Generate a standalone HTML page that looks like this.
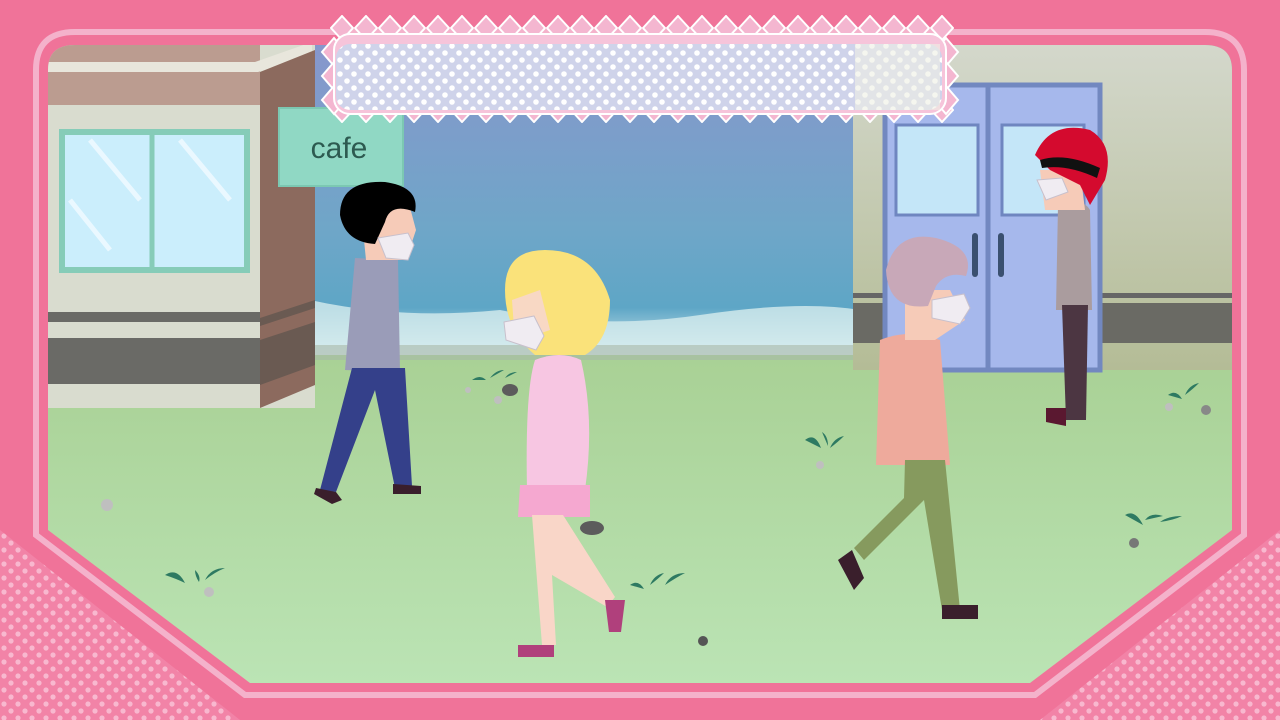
<!DOCTYPE html>
<html><head><meta charset="utf-8"><style>
html,body{margin:0;padding:0;width:1280px;height:720px;overflow:hidden;background:#f07399}
svg{display:block}
</style></head><body>
<svg width="1280" height="720" viewBox="0 0 1280 720" xmlns="http://www.w3.org/2000/svg">
<defs>
<pattern id="dots" width="14" height="14" patternUnits="userSpaceOnUse">
<rect width="14" height="14" fill="#f283a7"/><circle cx="4" cy="4" r="2.6" fill="#f8b8cf"/><circle cx="11" cy="11" r="2.6" fill="#f8b8cf"/></pattern>
<pattern id="ldots" width="14" height="14" patternUnits="userSpaceOnUse">
<rect width="14" height="14" fill="#cfd3ea"/><circle cx="4" cy="4" r="2.8" fill="#fff"/><circle cx="11" cy="11" r="2.8" fill="#fff"/></pattern>
<pattern id="diam" x="330" y="15" width="24" height="26" patternUnits="userSpaceOnUse">
<path d="M12 1 L23 13 L12 25 L1 13 Z" fill="#f4b6d0" stroke="#fff" stroke-width="2"/></pattern>
<pattern id="diam2" x="330" y="97" width="24" height="26" patternUnits="userSpaceOnUse">
<path d="M12 1 L23 13 L12 25 L1 13 Z" fill="#f4b6d0" stroke="#fff" stroke-width="2"/></pattern>
<linearGradient id="sky" x1="0" y1="0" x2="0" y2="1"><stop offset="0" stop-color="#8896cc"/><stop offset="0.6" stop-color="#6fa6c8"/><stop offset="0.85" stop-color="#5ea6c6"/><stop offset="1" stop-color="#d8ecee"/></linearGradient>
<linearGradient id="ground" x1="0" y1="0" x2="0" y2="1"><stop offset="0" stop-color="#8a9e80"/><stop offset="0.1" stop-color="#8da284"/><stop offset="0.45" stop-color="#a7cf92"/><stop offset="1" stop-color="#bde6b8"/></linearGradient>
<linearGradient id="wall" x1="0" y1="0" x2="0" y2="1"><stop offset="0" stop-color="#d4d8cc"/><stop offset="1" stop-color="#b4bc96"/></linearGradient>
<clipPath id="scene"><path d="M48 70 Q48 45 75 45 L1205 45 Q1232 45 1232 70 L1232 530 L1030 683 L250 683 L48 530 Z"/></clipPath>
</defs>
<path d="M0 530 L240 720 L0 720 Z" fill="url(#dots)"/>
<path d="M1280 530 L1040 720 L1280 720 Z" fill="url(#dots)"/>
<path d="M36 70 Q36 32 75 32 L1205 32 Q1244 32 1244 70 L1244 535 L1035 695 L245 695 L36 535 Z" fill="none" stroke="#f4b2cb" stroke-width="6"/>
<g clip-path="url(#scene)">
<rect x="0" y="0" width="1280" height="720" fill="url(#ground)"/>
<rect x="310" y="40" width="560" height="315" fill="url(#sky)"/>
<path d="M310 300 Q400 320 500 310 Q600 330 700 315 Q800 300 860 310 L860 355 L310 355 Z" fill="#d6ecee" opacity="0.8"/>
<rect x="310" y="345" width="550" height="15" fill="#a8b8a8" opacity="0.6"/>
<rect x="45" y="42" width="270" height="366" fill="#d9dccf"/>
<path d="M45 42 L260 42 L260 105 L45 105 Z" fill="#bb9c90"/>
<path d="M45 62 L255 62 L312 42 L312 56 L258 72 L45 72Z" fill="#e8e6dc"/>
<path d="M260 72 L315 50 L315 385 L260 408 Z" fill="#8c6a5e"/>
<rect x="45" y="312" width="215" height="10" fill="#6a6a66"/>
<rect x="45" y="338" width="215" height="46" fill="#6a6a66"/>
<path d="M260 318 L315 300 L315 308 L260 326Z M260 340 L315 322 L315 365 L260 385Z" fill="#6a5a52"/>
<rect x="62" y="132" width="185" height="138" fill="#cbeefc" stroke="#86ccb8" stroke-width="6"/>
<line x1="152" y1="132" x2="152" y2="270" stroke="#86ccb8" stroke-width="5"/>
<path d="M90 140 L140 200 M180 140 L230 200 M70 200 L110 250" stroke="#eaf8ff" stroke-width="5"/>
<rect x="279" y="108" width="124" height="78" fill="#90d8c4" stroke="#7cc8b2" stroke-width="2"/>
<text x="339" y="158" font-family="Liberation Sans, sans-serif" font-size="30" fill="#2d5a50" text-anchor="middle">cafe</text>
<rect x="853" y="42" width="385" height="328" fill="url(#wall)"/>
<rect x="853" y="293" width="385" height="5" fill="#666"/>
<rect x="853" y="303" width="385" height="40" fill="#6a6a64"/>
<rect x="885" y="85" width="215" height="285" fill="#a6b8ec" stroke="#7288c0" stroke-width="5"/>
<line x1="988" y1="85" x2="988" y2="370" stroke="#7288c0" stroke-width="5"/>
<rect x="896" y="125" width="82" height="90" fill="#c4e6f8" stroke="#6f86c0" stroke-width="3"/>
<rect x="1002" y="125" width="82" height="90" fill="#c4e6f8" stroke="#6f86c0" stroke-width="3"/>
<rect x="972" y="233" width="6" height="44" rx="3" fill="#3a5070"/>
<rect x="998" y="233" width="6" height="44" rx="3" fill="#3a5070"/>
<g fill="#2e7a62">
<path d="M165 575 q12 -8 20 8 q-8 -4 -20 -8Z M195 570 q6 6 4 12 q-4 -6 -4 -12Z M205 580 q6 -12 20 -12 q-10 4 -20 12Z"/>
<path d="M630 585 q8 -6 14 4 Z M650 585 q4 -10 14 -12 q-6 6 -14 12Z M665 585 q6 -12 20 -12 q-8 4 -20 12Z"/>
<path d="M805 440 q10 -8 16 8Z M822 432 q6 4 6 14Z M830 448 q4 -10 14 -12 q-6 6 -14 12Z"/>
<path d="M1125 515 q10 -6 18 10Z M1145 520 q6 -8 18 -4Z M1160 522 q8 -6 22 -6 q-8 4 -22 6Z"/>
<path d="M1168 395 q8 -6 14 4Z M1185 395 q4 -10 14 -12 q-6 6 -14 12Z"/>
<path d="M472 380 q8 -6 14 0Z M490 378 q6 -8 14 -8Z M505 378 q4 -6 12 -6Z"/>
</g>
<g fill="#bfbfbf"><circle cx="107" cy="505" r="6"/><circle cx="209" cy="592" r="5"/><circle cx="1134" cy="543" r="5" fill="#777"/><circle cx="1206" cy="410" r="5" fill="#888"/><circle cx="1169" cy="407" r="4"/><circle cx="703" cy="641" r="5" fill="#555"/><circle cx="820" cy="465" r="4"/><circle cx="498" cy="400" r="4"/><circle cx="468" cy="390" r="3"/></g>
<ellipse cx="592" cy="528" rx="12" ry="7" fill="#5c5c5c"/><ellipse cx="510" cy="390" rx="8" ry="6" fill="#5c5c5c"/>
<path d="M355 258 L345 370 L400 372 L398 260 Z" fill="#9a9cb8"/>
<path d="M352 368 L320 490 L336 492 L375 390 L395 488 L412 486 L405 368Z" fill="#34408a"/>
<path d="M316 488 l20 4 l6 8 l-10 4 l-18 -10Z M393 484 l28 2 l0 8 l-28 0Z" fill="#3a1f2c"/>
<path d="M360 200 q22 -20 48 0 l8 30 l-10 30 l-40 0 Z" fill="#f6cbb8"/>
<path d="M340 215 q0 -35 45 -33 q35 5 30 30 q-25 -10 -30 10 l-10 22 q-30 -2 -35 -29Z" fill="#000"/>
<path d="M378 238 l30 -5 l6 12 l-6 15 l-22 -2 Z" fill="#f0ecf2" stroke="#c8c0cc"/>
<path d="M535 360 q-10 30 -8 130 l58 0 q10 -70 -4 -130 Q560 350 535 360Z" fill="#f7c6e2"/>
<path d="M520 485 l70 0 l0 32 l-72 0Z" fill="#f5a8d0"/>
<path d="M532 515 l10 130 l14 0 l-4 -70 l55 32 l8 -10 l-52 -82Z" fill="#f9d6c8"/>
<path d="M518 645 l36 0 l0 12 l-36 0Z M605 600 l20 0 l-4 32 l-12 0Z" fill="#b0407c"/>
<path d="M505 290 q0 -40 40 -40 q50 0 65 50 q0 40 -25 55 l-50 0 q-30 -25 -30 -65Z" fill="#fae27a"/>
<path d="M512 300 l28 -10 l10 40 l-35 12 Z" fill="#f8d8c4"/>
<path d="M504 322 l30 -6 l10 20 l-8 14 l-30 -10Z" fill="#f0ecf2" stroke="#c8c0cc"/>
<path d="M880 340 q30 -12 60 0 l10 125 l-74 0Z" fill="#eeaa9c"/>
<path d="M905 460 l40 0 l15 150 l-18 0 l-18 -110 l-60 60 l-10 -12 l50 -50Z" fill="#869a5e"/>
<path d="M838 560 l14 -10 l12 28 l-10 12Z M942 605 l36 0 l0 14 l-36 0Z" fill="#3a1f2c"/>
<path d="M905 290 l45 0 l15 30 l-30 20 l-30 0Z" fill="#f6cbb8"/>
<path d="M886 270 q10 -40 50 -32 q40 10 30 38 q-20 -5 -30 10 l-8 20 q-40 5 -42 -36Z" fill="#c8a8b8"/>
<path d="M932 300 l32 -6 l6 14 l-10 16 l-28 -6Z" fill="#f0ecf2" stroke="#c8c0cc"/>
<path d="M1058 205 q25 -8 32 5 l2 100 l-36 0Z" fill="#aa9c9e"/>
<path d="M1062 305 l26 0 l-2 115 l-20 0Z" fill="#4c3642"/>
<path d="M1046 408 l20 0 l0 18 l-20 -4Z" fill="#5a1830"/>
<path d="M1040 170 l40 0 l5 40 l-40 0Z" fill="#f6cbb8"/>
<path d="M1035 155 q15 -35 55 -25 q25 15 15 50 l-15 25 l-10 -20 l-30 -15 Z" fill="#d40a2e"/>
<path d="M1040 160 q25 -8 60 8 l-3 10 q-30 -14 -55 -10Z" fill="#111"/>
<path d="M1037 180 l25 -2 l6 14 l-22 8 Z" fill="#f0ecf2" stroke="#c8c0cc"/>
</g>
<!-- banner -->
<rect x="330" y="15" width="624" height="26" fill="url(#diam)"/>
<rect x="330" y="97" width="624" height="26" fill="url(#diam2)"/>
<g fill="#f4b6d0" stroke="#fff" stroke-width="2">
<path d="M334 38 L346 52 L334 66 L322 52Z"/><path d="M334 62 L346 76 L334 90 L322 76Z"/><path d="M334 86 L346 100 L334 114 L322 100Z"/>
<path d="M946 38 L958 52 L946 66 L934 52Z"/><path d="M946 62 L958 76 L946 90 L934 76Z"/><path d="M946 86 L958 100 L946 114 L934 100Z"/>
</g>
<rect x="334" y="34" width="612" height="80" rx="16" fill="#f6c4da" stroke="#fff" stroke-width="2"/>
<rect x="336" y="44" width="606" height="66" rx="14" fill="url(#ldots)"/>
<rect x="855" y="44" width="85" height="66" fill="#eef0e4" opacity="0.6"/>
</svg>
</body></html>
